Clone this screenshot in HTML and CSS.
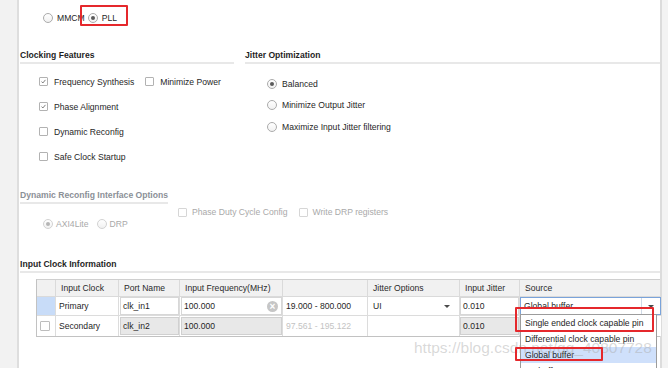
FILE: index.html
```html
<!DOCTYPE html>
<html>
<head>
<meta charset="utf-8">
<link rel="stylesheet" href="styles.css">
</head>
<body>
<div class="app">
  <div class="gutter"></div>
  <main class="content">
    <div class="prim-row">
      <label class="opt mmcm"><span class="rb"></span>MMCM</label>
      <label class="opt"><span class="rb on"></span>PLL</label>
    </div>

    <div class="twocol">
      <section class="sec-feat">
        <div class="heading">Clocking Features</div>
        <div class="feat-list">
          <div class="row">
            <label class="opt"><span class="cb"><svg viewBox="0 0 9 9"><path d="M2 4.6 L3.7 6.4 L7 2.4" /></svg></span>Frequency Synthesis</label>
            <label class="opt gap-l"><span class="cb"></span>Minimize Power</label>
          </div>
          <div class="row">
            <label class="opt"><span class="cb"><svg viewBox="0 0 9 9"><path d="M2 4.6 L3.7 6.4 L7 2.4" /></svg></span>Phase Alignment</label>
          </div>
          <div class="row">
            <label class="opt"><span class="cb"></span>Dynamic Reconfig</label>
          </div>
          <div class="row">
            <label class="opt"><span class="cb"></span>Safe Clock Startup</label>
          </div>
        </div>
      </section>
      <section class="sec-jit">
        <div class="heading">Jitter Optimization</div>
        <div class="jit-list">
          <div class="jrow"><label class="opt wide"><span class="rb on"></span>Balanced</label></div>
          <div class="jrow"><label class="opt wide"><span class="rb"></span>Minimize Output Jitter</label></div>
          <div class="jrow"><label class="opt wide"><span class="rb"></span>Maximize Input Jitter filtering</label></div>
        </div>
      </section>
    </div>

    <section class="sec-drp">
      <div class="heading dis fit">Dynamic Reconfig Interface Options</div>
      <div class="drp-checks">
        <label class="opt dis wide"><span class="cb"></span>Phase Duty Cycle Config</label>
        <label class="opt dis wide gap-l"><span class="cb"></span>Write DRP registers</label>
      </div>
      <div class="drp-radios">
        <label class="opt dis narrow"><span class="rb on"></span>AXI4Lite</label>
        <label class="opt dis narrow drp"><span class="rb"></span>DRP</label>
      </div>
    </section>

    <section class="sec-ici">
      <div class="heading">Input Clock Information</div>
      <div class="grid">
        <div class="hc"></div>
        <div class="hc">Input Clock</div>
        <div class="hc">Port Name</div>
        <div class="hc">Input Frequency(MHz)</div>
        <div class="hc"></div>
        <div class="hc">Jitter Options</div>
        <div class="hc">Input Jitter</div>
        <div class="hc last">Source</div>

        <div class="c sel"></div>
        <div class="c txt">Primary</div>
        <div class="c"><div class="field">clk_in1</div></div>
        <div class="c"><div class="field f3">100.000<span class="clear">×</span></div></div>
        <div class="c txt rng">19.000 - 800.000</div>
        <div class="c txt jo">UI<span class="arr"></span></div>
        <div class="c"><div class="field f6">0.010</div></div>
        <div class="c last src">
          <div class="combo"><span class="combo-txt">Global buffer</span><span class="combo-btn"><span class="arr"></span></span></div>
          <div class="list">
            <div class="item">Single ended clock capable pin</div>
            <div class="item">Differential clock capable pin</div>
            <div class="item hi">Global buffer</div>
            <div class="item">No buffer</div>
          </div>
        </div>

        <div class="c r2 chk"><span class="cb"></span></div>
        <div class="c r2 txt">Secondary</div>
        <div class="c r2"><div class="field grey">clk_in2</div></div>
        <div class="c r2"><div class="field grey f3">100.000</div></div>
        <div class="c r2 txt rng dim">97.561 - 195.122</div>
        <div class="c r2"></div>
        <div class="c r2"><div class="field grey f6">0.010</div></div>
        <div class="c r2 last"></div>
      </div>
    </section>
  </main>
  <div class="scroll"></div>

  <div class="watermark">https://blog.csdn.net/qq_40807728</div>
  <div class="mark m1"></div>
  <div class="mark m2"></div>
  <div class="mark m3"></div>
</div>
</body>
</html>
```

FILE: styles.css
```css
* { box-sizing: border-box; }
html, body { margin: 0; padding: 0; background: #fff; }
body {
  font-family: "Liberation Sans", Arial, sans-serif;
  font-size: 8.6px;
  color: #1f1f1f;
}
.app {
  position: relative;
  display: flex;
  width: 668px;
  height: 368px;
  overflow: hidden;
}
.gutter {
  flex: none;
  width: 19px;
  background: #f2f2f2;
  border-right: 2px solid #dedede;
}
.content {
  flex: none;
  width: 641px;
  padding-left: 1px;
  background: #fff;
}
.scroll {
  flex: none;
  width: 8px;
  background: #f3f3f3;
  border-left: 2px solid #dcdcdc;
}

/* generic options */
.opt {
  display: flex;
  align-items: center;
  gap: 6px;
  height: 12px;
  white-space: nowrap;
}
.opt.wide { gap: 5px; }
.opt.narrow { gap: 3px; }
.dis { color: #a9a9a9; }
.gap-l { margin-left: 11px; }

.rb {
  flex: none;
  width: 10px;
  height: 10px;
  border-radius: 50%;
  border: 1px solid #ababab;
  background: linear-gradient(#fff, #f1f1f1);
  display: flex;
  align-items: center;
  justify-content: center;
}
.rb.on::after {
  content: "";
  width: 4px;
  height: 4px;
  border-radius: 50%;
  background: #5a5a5a;
}
.dis .rb { border-color: #d2d2d2; }
.dis .rb.on::after { background: #b5b5b5; }

.cb {
  flex: none;
  width: 9px;
  height: 9px;
  border: 1px solid #b2b2b2;
  border-radius: 1px;
  background: #fff;
  display: flex;
}
.cb svg { width: 100%; height: 100%; }
.cb path { fill: none; stroke: #5c5c5c; stroke-width: 1; }
.dis .cb { border-color: #d6d6d6; }

/* top row */
.prim-row {
  height: 48px;
  padding: 12px 0 0 23px;
  display: flex;
  gap: 3px;
}
.prim-row .opt { gap: 4px; }

.heading {
  font-weight: bold;
  height: 16px;
  line-height: 14px;
  border-bottom: 2px solid #e8e8e8;
  color: #1f1f1f;
  white-space: nowrap;
}
.heading.dis { color: #8b9097; }
.heading.fit { width: fit-content; }

.twocol { display: flex; }
.sec-feat { width: 214px; flex: none; }
.sec-jit { flex: 1; margin-left: 11px; }

.feat-list { padding-top: 5px; }
.row {
  height: 25px;
  display: flex;
  align-items: center;
  padding-left: 19px;
}
.jit-list { padding-top: 9px; }
.jrow {
  height: 21.5px;
  display: flex;
  align-items: center;
  padding-left: 22px;
}

.sec-drp { margin-top: 19px; }
.drp-checks {
  margin-top: 2px;
  height: 12px;
  display: flex;
  padding-left: 158px;
}
.drp-radios {
  height: 12px;
  display: flex;
  padding-left: 23px;
}
.drp { margin-left: 8px; }

.sec-ici { margin-top: 27px; }
.grid {
  margin: 6px 0 0 16px;
  display: grid;
  grid-template-columns: 19px 63px 61px 103px 85px 92px 60px 141px;
  grid-template-rows: 17px 19px 20px;
  border-top: 1px solid #cfcfcf;
  border-left: 1px solid #c2c2c2;
  border-bottom: 1px solid #c2c2c2;
}
.hc {
  background: #f1f1f1;
  border-right: 1px solid #dadada;
  border-bottom: 1px solid #dadada;
  padding-left: 5px;
  display: flex;
  align-items: center;
  color: #2a2a2a;
}
.c {
  position: relative;
  border-right: 1px solid #dcdcdc;
  border-bottom: 1px solid #dcdcdc;
  display: flex;
  align-items: stretch;
  background: #fff;
}
.c.r2 { border-bottom: none; }
.c.last, .hc.last { border-right: none; }
.c.txt { align-items: center; padding-left: 3px; }
.c.sel { background: #c8dcf8; }
.c.chk { align-items: center; padding-left: 3px; }
.c.chk .cb { width: 10px; height: 10px; border-color: #bdbdbd; }
.rng { padding-left: 3px; }
.dim { color: #c3c3c3; }
.jo { padding-left: 5px !important; justify-content: space-between; padding-right: 9px; }

.arr {
  width: 0;
  height: 0;
  border-left: 3px solid transparent;
  border-right: 3px solid transparent;
  border-top: 3px solid #4a4a4a;
}

.field {
  flex: 1;
  margin: 0 0 0 1px;
  border: 1px solid #d7d7d7;
  background: #fff;
  padding-left: 2px;
  display: flex;
  align-items: center;
  position: relative;
}
.f3 { margin-left: 1px; margin-right: 0; }
.f6 { margin-left: 0; }
.field.grey {
  background: #e8e8e8;
  border-color: #d0d0d0;
  margin-top: 1px;
  margin-bottom: 1px;
}
.clear {
  position: absolute;
  right: 3px;
  top: 50%;
  margin-top: -5.5px;
  width: 11px;
  height: 11px;
  border-radius: 50%;
  background: #c6c6c6;
  color: #fff;
  font-size: 10px;
  line-height: 11px;
  text-align: center;
  font-weight: bold;
}

.src { padding: 0; }
.combo {
  flex: 1;
  display: flex;
  border: 1px solid #7aa3da;
  background: #fff;
}
.combo-txt {
  flex: 1;
  padding-left: 3px;
  display: flex;
  align-items: center;
}
.combo-btn {
  width: 19px;
  border-left: 1px solid #cfd9e6;
  display: flex;
  align-items: center;
  justify-content: center;
}
.list {
  position: absolute;
  top: 17px;
  left: 0;
  width: 137px;
  border: 1px solid #9c9c9c;
  background: #fff;
  z-index: 5;
}
.item {
  height: 16px;
  line-height: 16px;
  padding-left: 4px;
  white-space: nowrap;
  color: #1e1e1e;
}
.item.hi { background: #cfe0fb; }

.watermark {
  position: absolute;
  left: 414px;
  top: 339px;
  font-size: 15.5px;
  color: rgba(170, 170, 170, 0.45);
  white-space: nowrap;
  z-index: 8;
  pointer-events: none;
}
.mark {
  position: absolute;
  border: 2px solid #e5282c;
  border-radius: 1px;
  z-index: 10;
}
.m1 { left: 80px; top: 5px; width: 48px; height: 21px; }
.m2 { left: 515px; top: 307px; width: 139px; height: 25px; }
.m3 { left: 515px; top: 347px; width: 88px; height: 14px; }
```
